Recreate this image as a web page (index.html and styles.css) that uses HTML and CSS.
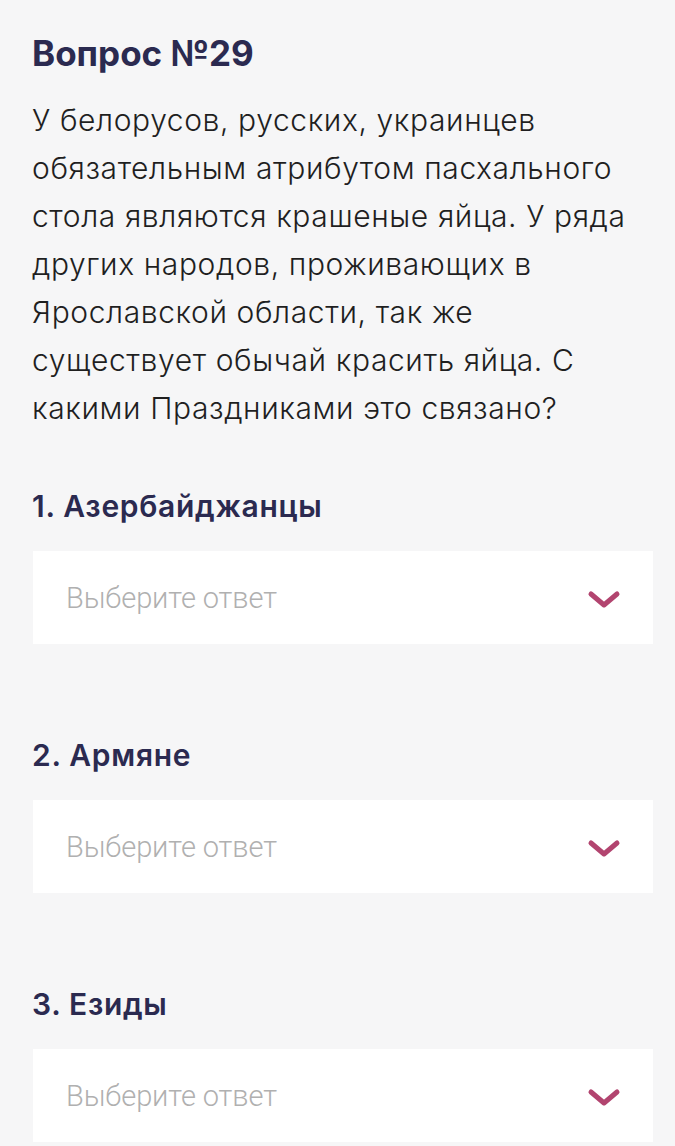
FILE: index.html
```html
<!DOCTYPE html>
<html lang="ru">
<head>
<meta charset="utf-8">
<link rel="stylesheet" href="styles.css">
</head>
<body>
<main class="page">
  <h1 class="title">Вопрос №29</h1>
  <p class="question">У белорусов, русских, украинцев обязательным атрибутом пасхального стола являются крашеные яйца. У ряда других народов, проживающих в Ярославской области, так же существует обычай красить яйца. С какими Праздниками это связано?</p>

  <section class="item">
    <h2 class="label">1. Азербайджанцы</h2>
    <div class="select">
      <span class="placeholder">Выберите ответ</span>
      <svg class="chev" width="34" height="20" viewBox="0 0 34 20"><path d="M4 4 L17 15 L30 4" fill="none" stroke="#b2446f" stroke-width="5" stroke-linecap="round" stroke-linejoin="round"/></svg>
    </div>
  </section>

  <section class="item">
    <h2 class="label">2. Армяне</h2>
    <div class="select">
      <span class="placeholder">Выберите ответ</span>
      <svg class="chev" width="34" height="20" viewBox="0 0 34 20"><path d="M4 4 L17 15 L30 4" fill="none" stroke="#b2446f" stroke-width="5" stroke-linecap="round" stroke-linejoin="round"/></svg>
    </div>
  </section>

  <section class="item">
    <h2 class="label">3. Езиды</h2>
    <div class="select">
      <span class="placeholder">Выберите ответ</span>
      <svg class="chev" width="34" height="20" viewBox="0 0 34 20"><path d="M4 4 L17 15 L30 4" fill="none" stroke="#b2446f" stroke-width="5" stroke-linecap="round" stroke-linejoin="round"/></svg>
    </div>
  </section>
</main>
</body>
</html>
```

FILE: styles.css
```css
html, body {
  margin: 0;
  padding: 0;
  background: #f6f6f7;
}
.page {
  padding: 30px 22px 0 32px;
  font-family: Inter, "Noto Sans", sans-serif;
}
.title {
  margin: 0;
  font-size: 35px;
  line-height: 46px;
  font-weight: 700;
  color: #2b2a50;
}
.question {
  margin: 20px 0 0 0;
  font-size: 30px;
  line-height: 48px;
  font-weight: 300;
  color: #1f1f1f;
  letter-spacing: 0.6px;
}
.item {
  margin-top: 54px;
}
.item + .item {
  margin-top: 91px;
}
.label {
  margin: 0;
  font-size: 30px;
  line-height: 40px;
  font-weight: 600;
  color: #2b2a50;
  letter-spacing: 0.7px;
}
.select {
  margin-top: 25px;
  margin-left: 1px;
  height: 93px;
  background: #ffffff;
  display: flex;
  align-items: center;
  justify-content: space-between;
  padding: 0 32px 0 33px;
  box-sizing: border-box;
}
.placeholder {
  font-family: Roboto, "Liberation Sans", sans-serif;
  font-weight: 300;
  font-size: 29px;
  color: #b0b0b0;
  letter-spacing: -0.1px;
}
.chev {
  display: block;
  margin-top: 4px;
}
```
